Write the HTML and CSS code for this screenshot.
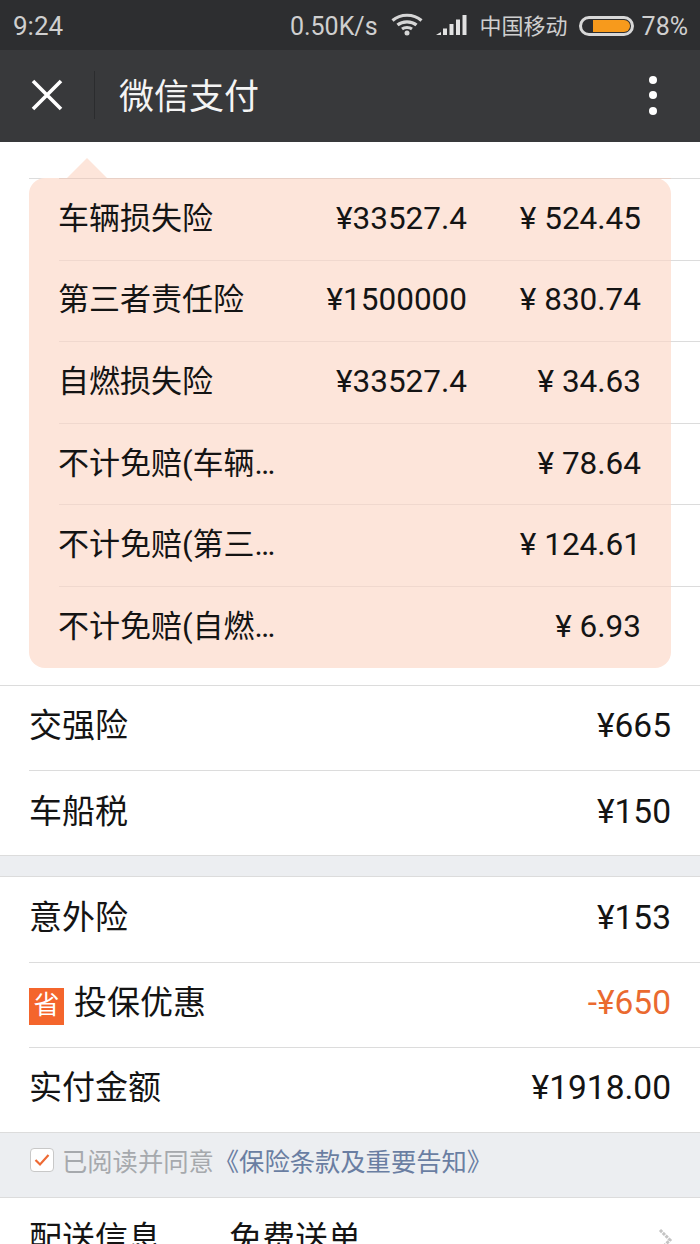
FILE: index.html
```html
<!DOCTYPE html>
<html lang="zh-CN">
<head>
<meta charset="utf-8">
<title>微信支付</title>
<link rel="stylesheet" href="styles.css">
</head>
<body>
<div class="page">
  <header class="status">
    <span class="time">9:24</span>
    <span class="status-right">
      <span class="speed">0.50K/s</span>
      <svg class="wifi" width="32" height="24" viewBox="0 0 32 24" fill="none" stroke="#d6d6d6" stroke-width="3.2">
        <path d="M1.5 8.5C9.5 1.5 22.5 1.500 30.500 8.500"/>
        <path d="M6.500 13C11.500 8.800 20.500 8.800 25.500 13"/>
        <path d="M11 17C13.800 15 18.200 15 21 17"/>
        <circle cx="16" cy="21" r="2.500" fill="#d6d6d6" stroke="none"/>
      </svg>
      <svg class="signal" width="32" height="22" viewBox="0 0 32 22" fill="#e2e2e2">
        <path d="M0 21L5 18V21Z"/>
        <rect x="7" y="14.500" width="4" height="6.500"/>
        <rect x="13.500" y="10" width="4" height="11"/>
        <rect x="20" y="5.500" width="4" height="15.500"/>
        <rect x="26.500" y="1" width="4" height="20"/>
      </svg>
      <span class="carrier">中国移动</span>
      <span class="battery"><span class="battery-fill"></span></span>
      <span class="percent">78%</span>
    </span>
  </header>

  <nav class="nav">
    <svg class="close" width="32" height="32" viewBox="0 0 32 32" stroke="#fff" stroke-width="3.600" fill="none">
      <path d="M2 2L30 30M30 2L2 30"/>
    </svg>
    <span class="nav-sep"></span>
    <span class="nav-title">微信支付</span>
    <span class="dots"><i></i><i></i><i></i></span>
  </nav>

  <main class="content">
    <div class="under">
      <div class="under-row"></div>
      <div class="under-row"></div>
      <div class="under-row"></div>
      <div class="under-row"></div>
      <div class="under-row"></div>
      <div class="under-row under-last"></div>
    </div>

    <section class="popover">
      <div class="pop-row"><span class="pop-name">车辆损失险</span><span class="pop-amount">¥33527.4</span><span class="pop-price">¥ 524.45</span></div>
      <div class="pop-row"><span class="pop-name">第三者责任险</span><span class="pop-amount">¥1500000</span><span class="pop-price">¥ 830.74</span></div>
      <div class="pop-row"><span class="pop-name">自燃损失险</span><span class="pop-amount">¥33527.4</span><span class="pop-price">¥ 34.63</span></div>
      <div class="pop-row"><span class="pop-name">不计免赔(车辆…</span><span class="pop-amount"></span><span class="pop-price">¥ 78.64</span></div>
      <div class="pop-row"><span class="pop-name">不计免赔(第三…</span><span class="pop-amount"></span><span class="pop-price">¥ 124.61</span></div>
      <div class="pop-row"><span class="pop-name">不计免赔(自燃…</span><span class="pop-amount"></span><span class="pop-price">¥ 6.93</span></div>
    </section>

    <section class="group group-first">
      <div class="row"><span class="label">交强险</span><span class="value">¥665</span></div>
      <div class="row"><span class="label">车船税</span><span class="value">¥150</span></div>
    </section>
    <div class="gap"></div>
    <section class="group">
      <div class="row"><span class="label">意外险</span><span class="value">¥153</span></div>
      <div class="row"><span class="discount"><span class="badge">省</span><span class="label discount-label">投保优惠</span></span><span class="value orange">-¥650</span></div>
      <div class="row"><span class="label">实付金额</span><span class="value">¥1918.00</span></div>
    </section>
    <div class="agree">
      <span class="checkbox">
        <svg width="16" height="14" viewBox="0 0 16 14" fill="none" stroke="#ee6a34" stroke-width="2.200"><path d="M1.500 7L6 11.500L14.500 2"/></svg>
      </span>
      <span class="agree-text">已阅读并同意</span><span class="agree-link">《保险条款及重要告知》</span>
    </div>
    <div class="delivery">
      <span class="delivery-label">配送信息</span><span>免费送单</span>
      <svg class="chevron" width="16" height="24" viewBox="0 0 16 24" fill="none" stroke="#c4c4c4" stroke-width="3"><path d="M3 2L13 12L3 22" stroke-dasharray="3 1"/></svg>
    </div>
  </main>
</div>
</body>
</html>
```

FILE: styles.css
```css
* {
  box-sizing: border-box;
}

html,
body {
  margin: 0;
  padding: 0;
  background: #fff;
}

.page {
  width: 700px;
  height: 1244px;
  overflow: hidden;
  font-family: Roboto, "Noto Sans CJK SC", sans-serif;
  color: #141414;
}

.status {
  height: 50px;
  background: #2d2e30;
  color: #cfcfcf;
  display: flex;
  align-items: center;
  justify-content: space-between;
  padding: 2px 12px 0 13px;
  font-size: 25px;
}

.time {
  font-size: 26px;
}

.status-right {
  display: flex;
  align-items: center;
}

.wifi {
  margin-left: 13px;
  margin-top: -4px;
}

.signal {
  margin-left: 13px;
  margin-top: -2px;
}

.carrier {
  font-size: 22px;
  margin-left: 12px;
  margin-bottom: 5px;
}

.battery {
  width: 55px;
  height: 20px;
  margin-left: 11px;
  border: 3px solid #d8d8d8;
  border-radius: 10px;
  background: #2d2e30;
  padding: 1px 1px 1px 11px;
  display: flex;
}

.battery-fill {
  flex: 1;
  background: #f79a1c;
  border-radius: 0 7px 7px 0;
}

.percent {
  margin-left: 8px;
}

.nav {
  height: 92px;
  background: #38393b;
  display: flex;
  align-items: center;
  padding: 0 43px 2px 31px;
}

.close {
  flex: none;
}

.nav-sep {
  width: 1px;
  height: 48px;
  background: #2b2c2e;
  margin-left: 31px;
}

.nav-title {
  margin-left: 24px;
  margin-bottom: 3px;
  color: #f4f4f4;
  font-size: 35px;
  flex: 1;
}

.dots {
  display: flex;
  flex-direction: column;
  gap: 7.500px;
}

.dots i {
  width: 8px;
  height: 8px;
  border-radius: 50%;
  background: #fff;
}

.content {
  position: relative;
  padding-top: 36px;
}

.under-row {
  height: 81.600px;
  margin-left: 29px;
  border-top: 1px solid #dcdcdc;
}

.under-last {
  height: 98.700px;
}

.popover {
  position: absolute;
  left: 29px;
  top: 36px;
  width: 642px;
  height: 490px;
  background: #fde5da;
  border-radius: 16px;
  padding-left: 30px;
  font-size: 31px;
}

.popover::before {
  content: "";
  position: absolute;
  left: 38px;
  top: -20px;
  width: 40px;
  height: 20px;
  background: #fde5da;
  clip-path: polygon(50% 0, 100% 100%, 0 100%);
}

.pop-row {
  height: 81.600px;
  display: flex;
  align-items: center;
  border-top: 1px solid #f0d8ce;
  padding-right: 30px;
  padding-bottom: 2px;
}

.pop-row:first-child {
  border-top-color: #e8d0c6;
}

.pop-name {
  width: 217px;
  flex: none;
  margin-left: -1px;
  margin-bottom: 6px;
  white-space: nowrap;
}

.pop-amount {
  width: 192px;
  flex: none;
  text-align: right;
  font-size: 31.500px;
}

.pop-price {
  flex: 1;
  text-align: right;
  font-size: 31.500px;
}

.group {
  border-bottom: 1px solid #dcdcdc;
  border-top: 1px solid #dcdcdc;
  font-size: 33px;
}

.row {
  height: 85px;
  margin-left: 29px;
  padding-right: 29px;
  padding-bottom: 4px;
  border-top: 1px solid #dcdcdc;
  display: flex;
  align-items: center;
  justify-content: space-between;
}

.row:first-child {
  height: 84.500px;
  border-top: 0;
}

.label {
  margin-bottom: 5px;
}

.value {
  font-size: 33.500px;
}

.gap {
  height: 20px;
  background: #eceef1;
}

.discount {
  display: flex;
  align-items: center;
}

.badge {
  width: 35px;
  height: 37px;
  background: #f4652c;
  color: #fff;
  font-size: 26px;
  line-height: 35px;
  text-align: center;
  margin-top: 8px;
}

.discount-label {
  margin-left: 10px;
}

.orange {
  color: #ea6a30;
}

.agree {
  height: 65px;
  background: #eceef1;
  border-bottom: 1px solid #dcdcdc;
  display: flex;
  align-items: center;
  padding-left: 30px;
  padding-bottom: 9px;
  font-size: 25.300px;
}

.checkbox {
  width: 24px;
  height: 24px;
  background: #fff;
  border: 1px solid #c8c8c8;
  border-radius: 4px;
  display: flex;
  align-items: center;
  justify-content: center;
}

.agree-text {
  margin-left: 8px;
  color: #a6a9ad;
}

.agree-link {
  color: #6a7ea2;
  white-space: nowrap;
}

.delivery {
  position: relative;
  height: 80px;
  padding: 14px 0 0 29px;
  font-size: 33px;
  display: flex;
  align-items: flex-start;
}

.delivery-label {
  width: 200px;
}

.chevron {
  position: absolute;
  right: 27px;
  top: 30px;
}
```
